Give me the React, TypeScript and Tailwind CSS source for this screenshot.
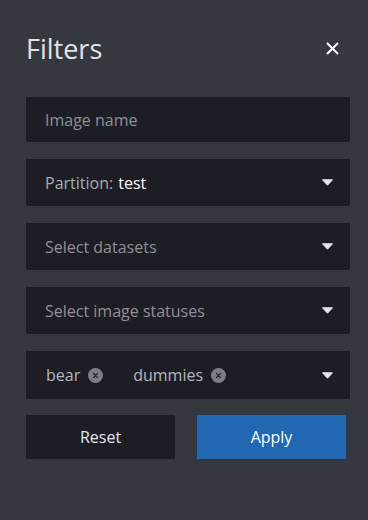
import React from "react";

function Caret() {
  return (
    <svg width="11" height="7" viewBox="0 0 11 7" className="shrink-0">
      <path d="M0.5 0.8 L10.5 0.8 L5.5 6.2 Z" fill="#e6e7ea" stroke="#e6e7ea" strokeWidth="1" strokeLinejoin="round" />
    </svg>
  );
}

function ChipX() {
  return (
    <svg width="15" height="15" viewBox="0 0 15 15" className="shrink-0">
      <circle cx="7.5" cy="7.5" r="7.5" fill="#7d7e84" />
      <path d="M5.5 5.5 L9.5 9.5 M9.5 5.5 L5.5 9.5" stroke="#2a2b31" strokeWidth="1.2" strokeLinecap="round" />
    </svg>
  );
}

function Field({ children, caret = true }: { children: React.ReactNode; caret?: boolean }) {
  return (
    <div className="flex items-center justify-between bg-[#1d1e25] h-[47px] pl-[19px] pr-[17px] text-[16px]">
      <div className="flex items-center">{children}</div>
      {caret && <Caret />}
    </div>
  );
}

export default function App() {
  const tags = ["bear", "dummies"];
  return (
    <div
      className="w-[368px] h-[520px] bg-[#363840] pl-[26px] pr-[18px] pt-[30px]"
      style={{ fontFamily: '"Open Sans", "Noto Sans", sans-serif' }}
    >
      <div className="flex items-center justify-between h-[36px] pr-[11px]">
        <h1 className="text-[27px] text-[#e2e3e6] leading-none">Filters</h1>
        <svg width="13" height="13" viewBox="0 0 13 13">
          <path d="M1 1 L12 12 M12 1 L1 12" stroke="#ffffff" strokeWidth="2" />
        </svg>
      </div>

      <div className="mt-[31px] flex flex-col gap-[17px]">
        <div className="flex items-center bg-[#1d1e25] h-[45px] pl-[19px] text-[16px] text-[#8e9097]">
          Image name
        </div>
        <Field>
          <span className="text-[#a9abb1]">Partition:</span>
          <span className="text-white ml-[5px]">test</span>
        </Field>
        <Field>
          <span className="text-[#8e9097]">Select datasets</span>
        </Field>
        <Field>
          <span className="text-[#8e9097]">Select image statuses</span>
        </Field>
        <div className="flex items-center justify-between bg-[#1d1e25] h-[48px] pl-[20px] pr-[17px] text-[16px]">
          <div className="flex items-center gap-[30px]">
            {tags.map((t) => (
              <div key={t} className="flex items-center gap-[8px] text-[#b5b7bd]">
                <span>{t}</span>
                <ChipX />
              </div>
            ))}
          </div>
          <Caret />
        </div>
      </div>

      <div className="mt-[16px] flex justify-between pr-[4px]">
        <button className="w-[149px] h-[44px] bg-[#1d1e25] text-[#e6e7ea] text-[16px]">Reset</button>
        <button className="w-[149px] h-[44px] bg-[#2167b1] text-white text-[16px]">Apply</button>
      </div>
    </div>
  );
}
